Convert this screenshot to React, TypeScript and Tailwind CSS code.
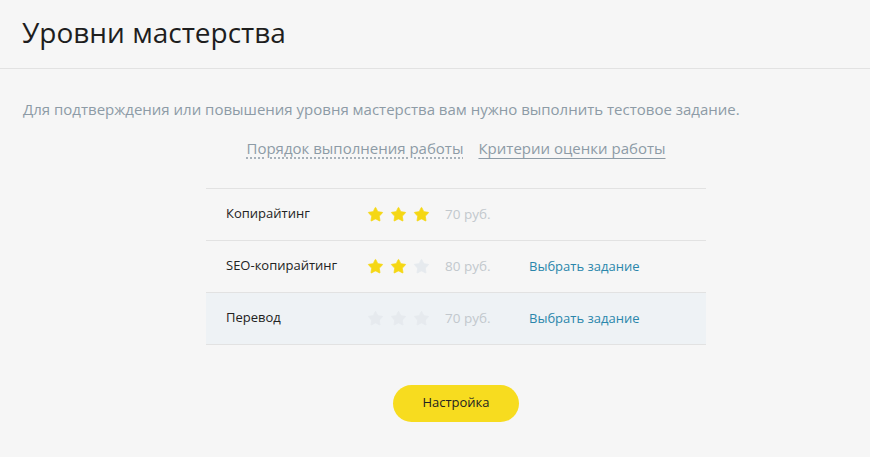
import { Star } from 'lucide-react';

type Row = {
  name: string;
  stars: number;
  price: string;
  action?: boolean;
  active?: boolean;
};

const rows: Row[] = [
  { name: 'Копирайтинг', stars: 3, price: '70 руб.' },
  { name: 'SEO-копирайтинг', stars: 2, price: '80 руб.', action: true },
  { name: 'Перевод', stars: 0, price: '70 руб.', action: true, active: true },
];

function Stars({ count }: { count: number }) {
  return (
    <div className="flex items-center gap-[6px]">
      {[0, 1, 2].map((i) => (
        <Star
          key={i}
          className={i < count ? 'w-[17px] h-[17px] text-[#f5d714]' : 'w-[17px] h-[17px] text-[#e6eaee]'}
          fill="currentColor"
          strokeWidth={1}
        />
      ))}
    </div>
  );
}

export default function App() {
  return (
    <div className="min-h-[457px] bg-[#f6f6f6] font-['Open_Sans',sans-serif]">
      {/* Header */}
      <div className="h-[69px] flex items-center px-[22px] border-b border-[#e2e2e2]">
        <h1 className="text-[28px] text-[#1e1e1e] leading-none pb-[4px]">Уровни мастерства</h1>
      </div>

      {/* Content */}
      <div className="pt-[29px] px-[23px]">
        <p className="text-[15px] text-[#8d9ba6] leading-[22px]">
          Для подтверждения или повышения уровня мастерства вам нужно выполнить тестовое задание.
        </p>
      </div>

      <div className="ml-[42px]">
        <div className="flex justify-center gap-[15px] mt-[17px]">
          <a className="text-[15px] text-[#8d9ba6] underline decoration-dotted underline-offset-4 cursor-pointer">
            Порядок выполнения работы
          </a>
          <a className="text-[15px] text-[#8d9ba6] underline underline-offset-4 cursor-pointer">
            Критерии оценки работы
          </a>
        </div>

        {/* Table */}
        <div className="w-[500px] mx-auto mt-[28px] border-t border-[#e2e2e2]">
          {rows.map((r) => (
            <div
              key={r.name}
              className={
                r.active
                  ? 'h-[52px] flex items-center pl-[20px] border-b border-[#e2e2e2] bg-[#eef2f5]'
                  : 'h-[52px] flex items-center pl-[20px] border-b border-[#e2e2e2]'
              }
            >
              <div className="w-[141px] text-[13px] text-[#222]">{r.name}</div>
              <Stars count={r.stars} />
              <div className="w-[99px] pl-[15px] text-[13.5px] text-[#c2c8cd]">{r.price}</div>
              {r.action && (
                <a className="text-[13px] text-[#2a86ab] cursor-pointer pt-[2px]">Выбрать задание</a>
              )}
            </div>
          ))}
        </div>

        {/* Button */}
        <div className="flex justify-center mt-[40px] pb-[36px]">
          <button className="w-[126px] h-[37px] rounded-full bg-[#f7dc1f] text-[13px] text-[#222]">
            Настройка
          </button>
        </div>
      </div>
    </div>
  );
}
